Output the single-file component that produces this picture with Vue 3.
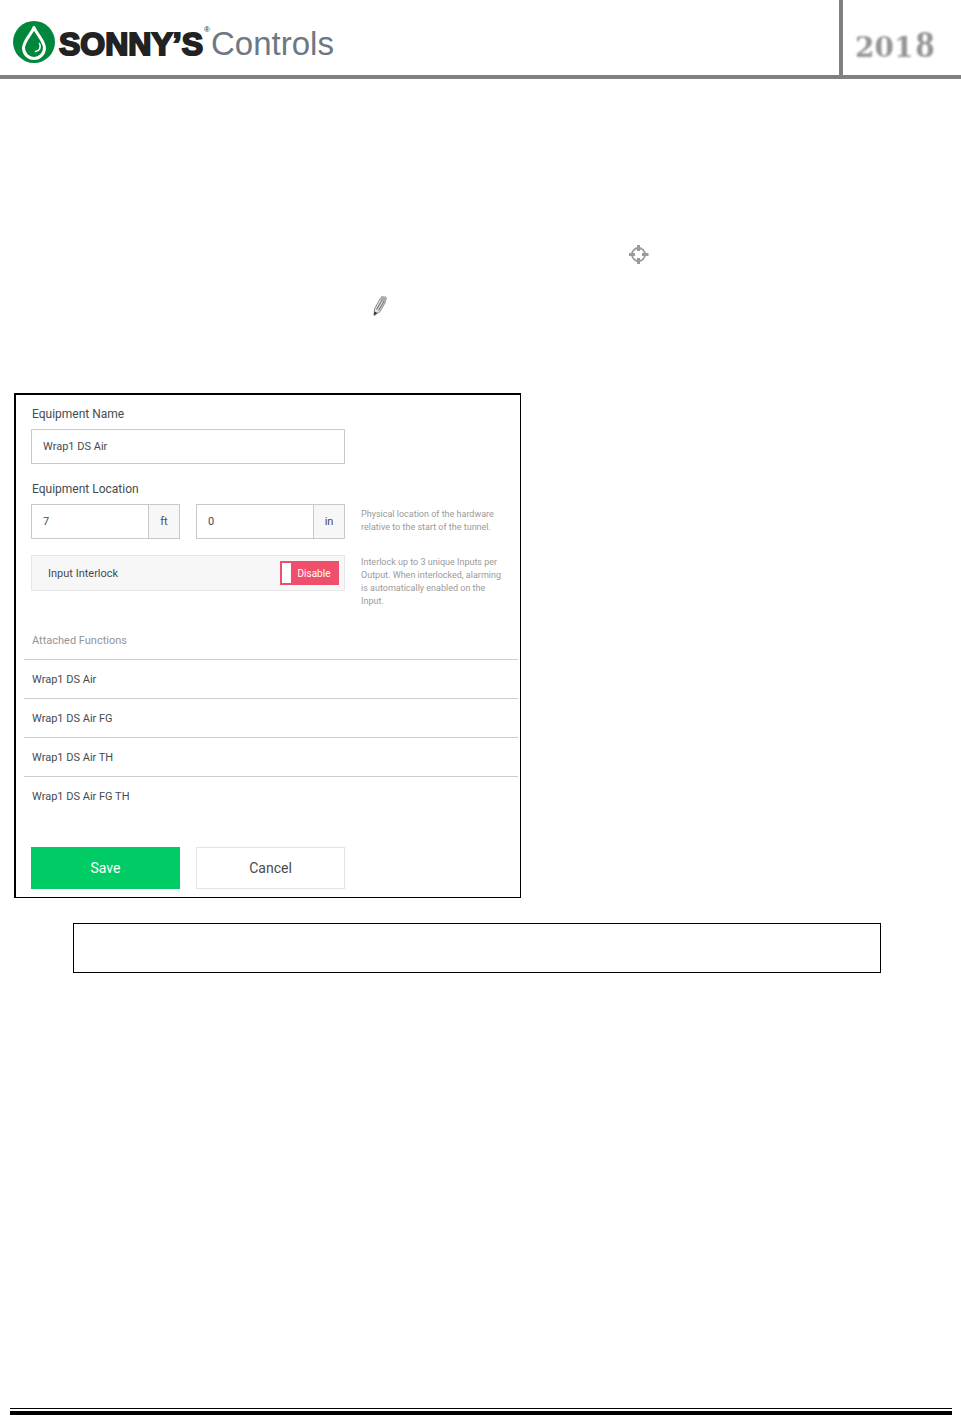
<script setup>
import { ref } from 'vue'

const name = ref('Wrap1 DS Air')
const feet = ref('7')
const inches = ref('0')
const interlock = ref(false)
const functions = ['Wrap1 DS Air', 'Wrap1 DS Air FG', 'Wrap1 DS Air TH', 'Wrap1 DS Air FG TH']
</script>

<template>
  <div class="page">
    <header class="header">
      <div class="brand">
        <svg class="drop" viewBox="0 0 42 42" aria-hidden="true">
          <circle cx="21" cy="21" r="21" fill="#00873c" />
          <path d="M21 6.500C18.500 13 10.500 20 10.500 27a10.500 10.500 0 0 0 21 0C31.500 20 23.500 13 21 6.500Z" fill="none" stroke="#fff" stroke-width="3" stroke-linejoin="round" />
          <path d="M26.500 22.500c2 4-.2 7.500-4 8" fill="none" stroke="#fff" stroke-width="1.600" stroke-linecap="round" />
        </svg>
        <span class="sonnys">SONNY’S</span>
        <span class="reg">®</span>
        <span class="controls">Controls</span>
      </div>
      <div class="year"><span>201</span><span class="eight">8</span></div>
    </header>

    <main class="content">
      <div class="line locate">
        <svg width="20" height="20" viewBox="0 0 20 20" aria-hidden="true">
          <circle cx="9.500" cy="9.500" r="6.500" fill="none" stroke="#979ca2" stroke-width="1.800" />
          <path d="M9.500 0V6M9.500 13v6M0 9.500H6M13 9.500h6.500" stroke="#979ca2" stroke-width="3" />
        </svg>
      </div>
      <div class="line edit">
        <svg width="14" height="22" viewBox="0 0 14 22" aria-hidden="true">
          <path d="M1.500 14 7 4l5.500 3L7 16.500 1 20.500Z" fill="#e4e4e4" stroke="#888" stroke-width="1" />
          <path d="M6.500 4.500 8.500 1l4.500.5 1 2-1.500 4Z" fill="#aaa" />
          <path d="M3.500 14.500 9 5.500M5.500 15.500 11 6.500" stroke="#777" stroke-width="1.200" />
          <path d="M1.300 16.500 1 20.500 4.500 18Z" fill="#333" />
        </svg>
      </div>

      <form class="card" @submit.prevent>
        <div class="form">
          <label class="title" for="name">Equipment Name</label>
          <input id="name" v-model="name" class="box wide" type="text" />

          <label class="title second" for="feet">Equipment Location</label>
          <div class="group">
            <input id="feet" v-model="feet" type="text" />
            <label class="unit" for="feet">ft</label>
          </div>
          <div class="group">
            <input id="inches" v-model="inches" type="text" />
            <label class="unit" for="inches">in</label>
          </div>
          <p class="hint place">Physical location of the hardware relative to the start of the tunnel.</p>

          <div class="interlock wide">
            <label for="interlock">Input Interlock</label>
            <label class="switch">
              <input id="interlock" v-model="interlock" type="checkbox" />
              <span>Disable</span>
            </label>
          </div>
          <p class="hint lock">Interlock up to 3 unique Inputs per Output. When interlocked, alarming is automatically enabled on the Input.</p>
        </div>

        <table class="functions">
          <thead>
            <tr><th scope="col">Attached Functions</th></tr>
          </thead>
          <tbody>
            <tr v-for="fn in functions" :key="fn"><td>{{ fn }}</td></tr>
          </tbody>
        </table>

        <div class="actions">
          <button class="save" type="submit">Save</button>
          <button class="cancel" type="button">Cancel</button>
        </div>
      </form>

      <div class="note"></div>
    </main>

    <footer class="footer"></footer>
  </div>
</template>

<style>
body {
  margin: 0;
  background: #fff;
}
</style>

<style scoped>
.page {
  display: flex;
  flex-direction: column;
  min-height: 100vh;
  font-family: Roboto, "Liberation Sans", sans-serif;
  font-size: 11px;
  color: #454b50;
}
.page *,
.page {
  box-sizing: border-box;
}
.header {
  display: flex;
  justify-content: space-between;
  height: 79px;
  border-bottom: 4px solid #808080;
}
.brand {
  display: flex;
  align-items: center;
  padding: 8px 0 0 13px;
}
.drop {
  width: 42px;
  height: 42px;
  margin-right: 4px;
}
.sonnys {
  padding-top: 4px;
  font: bold 32px/42px "Liberation Sans", Arial, sans-serif;
  color: #222;
  -webkit-text-stroke: 2px #222;
}
.reg {
  align-self: flex-start;
  width: 8px;
  margin-top: 16px;
  font: 8px/12px "Liberation Sans", sans-serif;
  text-align: center;
  color: #222;
}
.controls {
  padding-top: 4px;
  font: 33px/42px "Liberation Sans", Arial, sans-serif;
  color: #6d7882;
}
.year {
  display: flex;
  align-items: baseline;
  gap: 2px;
  width: 122px;
  padding: 22px 0 0 12px;
  border-left: 4px solid #808080;
  font: bold 28px/44px "DejaVu Serif", serif;
  color: #949494;
}
.year span {
  filter: blur(1px);
}
.year .eight {
  font-family: "Liberation Serif", serif;
  font-size: 38px;
}
.content {
  display: flex;
  flex-direction: column;
  align-items: flex-start;
}
.line {
  display: flex;
  height: 22px;
}
.locate {
  margin-top: 166px;
  padding-left: 629px;
}
.edit {
  margin-top: 28px;
  padding-left: 373px;
}
.card {
  width: 507px;
  max-width: calc(100% - 28px);
  margin: 76px 0 0 14px;
  padding: 11px 2px 8px 8px;
  border: solid #000;
  border-width: 2px 1px 1px 2px;
}
.form {
  display: grid;
  grid-template-columns: 149px 149px 1fr;
  column-gap: 16px;
  align-items: start;
  padding: 0 10px 0 7px;
}
.title {
  grid-column: 1 / -1;
  margin-bottom: 7px;
  padding-left: 1px;
  font-size: 12px;
  line-height: 16px;
}
.second {
  margin-top: 17px;
}
.wide {
  grid-column: 1 / 3;
}
input {
  min-width: 0;
  margin: 0;
  font: inherit;
  color: inherit;
}
.box,
.group {
  height: 35px;
  border: 1px solid #c9c9c9;
  background: #fff;
}
.box {
  padding: 0 11px;
}
.group {
  display: flex;
}
.group input {
  flex: 1;
  padding: 0 11px;
  border: 0;
  background: none;
}
.unit {
  width: 31px;
  border-left: 1px solid #c9c9c9;
  background: #f7f7f7;
  line-height: 33px;
  text-align: center;
}
.hint {
  margin: 0;
  font-size: 9px;
  line-height: 13px;
  color: #9a9a9a;
}
.place {
  padding-top: 4px;
}
.lock {
  padding-top: 17px;
}
.interlock {
  display: flex;
  align-items: center;
  justify-content: space-between;
  height: 36px;
  margin-top: 16px;
  padding: 0 5px 0 16px;
  border: 1px solid #e6e6e6;
  background: #f7f7f7;
}
.switch {
  display: flex;
  align-items: center;
  width: 59px;
  height: 24px;
  padding: 0 2px;
  background: #ef4f6b;
  color: #fff;
  font-size: 10px;
}
.switch input {
  appearance: none;
  width: 9px;
  height: 20px;
  background: #fff;
}
.switch span {
  flex: 1;
  text-align: center;
}
.functions {
  width: 100%;
  margin-top: 13px;
  border-collapse: separate;
  border-spacing: 0;
}
th,
td {
  height: 39px;
  padding: 0 8px;
  border-bottom: 1px solid #cdcdcd;
  text-align: left;
  font-weight: 400;
}
th {
  color: #949494;
}
tbody tr:last-child td {
  height: 38px;
  border-bottom: 0;
}
.actions {
  display: flex;
  gap: 16px;
  margin: 32px 0 0 7px;
}
button {
  width: 149px;
  height: 42px;
  padding: 0;
  font: 14px Roboto, sans-serif;
}
.save {
  border: 0;
  background: #00cc66;
  color: #fff;
}
.cancel {
  border: 1px solid #e3e3e3;
  background: #fff;
  color: #454b50;
}
.note {
  align-self: stretch;
  height: 50px;
  margin: 25px 80px 0 73px;
  border: 1px solid #000;
}
.footer {
  height: 7px;
  margin: auto 9px 0 10px;
  border-top: 1px solid #000;
  border-bottom: 4px solid #000;
}
</style>
